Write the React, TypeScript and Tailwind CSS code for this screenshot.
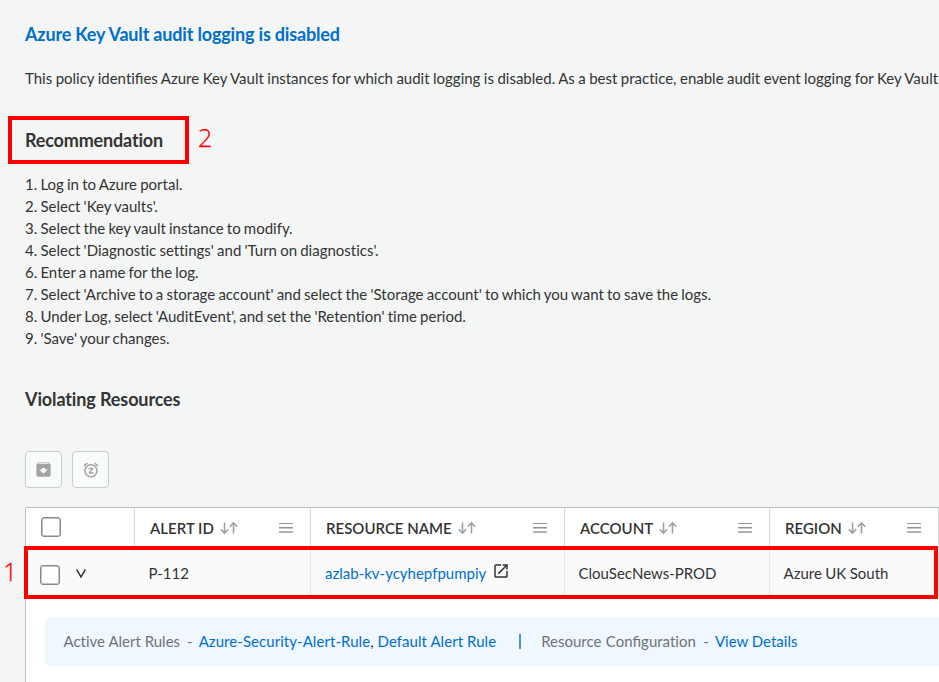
import type { ReactNode } from "react";
import { MdArchive, MdOpenInNew, MdSnooze } from "react-icons/md";

const steps = [
  "1. Log in to Azure portal.",
  "2. Select 'Key vaults'.",
  "3. Select the key vault instance to modify.",
  "4. Select 'Diagnostic settings' and 'Turn on diagnostics'.",
  "6. Enter a name for the log.",
  "7. Select 'Archive to a storage account' and select the 'Storage account' to which you want to save the logs.",
  "8. Under Log, select 'AuditEvent', and set the 'Retention' time period.",
  "9. 'Save' your changes.",
];

const columns = "grid grid-cols-[108px_176px_254px_205px_169px_1fr]";

function SortIcon() {
  return (
    <svg className="ml-[6px] h-[14px] w-[18px] shrink-0" viewBox="0 0 18 14" fill="none" stroke="#9aa3a1" strokeWidth="1.6">
      <path d="M4.5 1.5v10.5M0.7 8.2l3.8 3.8 3.8-3.8M13.5 12.5V2M9.7 5.8l3.8-3.8 3.8 3.8" />
    </svg>
  );
}

function MenuIcon() {
  return (
    <svg className="h-[10px] w-[14px]" viewBox="0 0 14 10" shapeRendering="crispEdges">
      <path fill="#8f9696" d="M0 0h14v1H0zM0 4h14v1H0z" />
      <path fill="#c4c8c8" d="M0 5h14v1H0z" />
      <path fill="#aeb2b2" d="M0 8h14v2H0z" />
    </svg>
  );
}

function HeaderCell({ children }: { children: ReactNode }) {
  return (
    <div className="flex items-center border-l border-[#d5d9da] pt-px pr-[17px] pl-[15px] font-semibold">
      <span>{children}</span>
      <SortIcon />
      <span className="ml-auto">
        <MenuIcon />
      </span>
    </div>
  );
}

function Checkbox() {
  return <span className="block size-5 rounded-[3px] border-[1.5px] border-[#84898c] bg-white shadow-[inset_0_0_0_0.5px_#84898c]" />;
}

function ToolButton({ children }: { children: ReactNode }) {
  return (
    <button className="flex size-[37px] items-center justify-center rounded-[4px] border border-[#c9cccc] bg-[#f9fafa] text-[#a2a4a4]">
      {children}
    </button>
  );
}

function Fi() {
  return <span className="[font-variant-ligatures:common-ligatures]">fi</span>;
}

export default function App() {
  return (
    <main className="relative h-[682px] w-full overflow-hidden bg-[#f4f6f5] pl-[25px] font-['Lato','Liberation_Sans',sans-serif] text-[15px] leading-[22px] whitespace-nowrap text-[#333] [font-variant-ligatures:no-common-ligatures]">
      <h1 className="pt-[23px] text-[18px] font-bold tracking-[-0.17px] text-[#006fcc]">
        <span>Azure Key Vault audit logging is disabled</span>
      </h1>
      <p className="mt-[22px] [word-spacing:-0.38px]">
        This policy identi<Fi />es Azure Key Vault instances for which audit logging is disabled. As a best practice, enable audit event logging for Key Vault
      </p>
      <h2 className="mt-[40px] text-[18px] font-bold tracking-[-0.17px]">
        <span>Recommendation</span>
      </h2>
      <ol className="mt-[22px] [word-spacing:-0.67px]">
        {steps.map((step) => (
          <li key={step}>{step}</li>
        ))}
      </ol>
      <h2 className="mt-[39px] text-[18px] font-bold tracking-[-0.12px]">
        <span>Violating Resources</span>
      </h2>

      <div className="mt-[41px] flex gap-[10px]">
        <ToolButton>
          <MdArchive size={19} />
        </ToolButton>
        <ToolButton>
          <MdSnooze size={18} />
        </ToolButton>
      </div>

      <section className="mt-[19px] h-[200px] border-t border-l border-[#bcc1c3] bg-white">
        <div className={`${columns} h-[39px]`}>
          <div className="pt-[9px] pl-[15px]">
            <Checkbox />
          </div>
          <HeaderCell>ALERT ID</HeaderCell>
          <HeaderCell>RESOURCE NAME</HeaderCell>
          <HeaderCell>ACCOUNT</HeaderCell>
          <HeaderCell>REGION</HeaderCell>
          <div className="border-l border-[#d5d9da]" />
        </div>
        <div className={`${columns} h-[50px] items-stretch bg-[#fafafa]`}>
          <div className="flex items-center gap-4 pt-[6px] pl-[14px]">
            <Checkbox />
            <svg className="mb-[3px] h-[9px] w-[10px]" viewBox="0 0 10 9" fill="none" stroke="#333" strokeWidth="1.5">
              <path d="M0.7 0.3L5 8L9.3 0.3" />
            </svg>
          </div>
          <div className="flex items-center pt-[2px] pl-[14.5px]">P-112</div>
          <div className="flex items-center border-l border-[#e6e8e8] pt-[2px] pl-[14px]">
            <a className="text-[#006fcc]">azlab-kv-ycyhepfpumpiy</a>
            <MdOpenInNew size={18} className="mb-[5px] ml-[6px]" />
          </div>
          <div className="flex items-center border-l border-[#e6e8e8] pt-[2px] pl-[13.5px]">ClouSecNews-PROD</div>
          <div className="flex items-center border-l border-[#e6e8e8] pt-[2px] pl-[13.5px] [word-spacing:-0.4px]">Azure UK South</div>
          <div className="border-l border-[#e6e8e8]" />
        </div>
        <div className="mt-5 ml-[19px] flex h-[49px] items-center rounded-l-[4px] bg-[#eff7ff] pb-[2px] pl-[18.5px] text-[#707375]">
          <span>Active Alert Rules</span>
          <span className="ml-[7px]">-</span>
          <span className="ml-[6px] tracking-[0.055px] text-[#006fcc]">
            Azure-Security-Alert-Rule<span className="text-[#333]">,</span> Default Alert Rule
          </span>
          <span className="mt-px ml-[23px] h-[15px] w-[2px] bg-[#4a93d0]" />
          <span className="ml-[20px] [word-spacing:0.5px]">Resource Con<Fi />guration</span>
          <span className="ml-[7.5px]">-</span>
          <a className="ml-[6px]  text-[#006fcc]">View Details</a>
        </div>
      </section>

      <div className="absolute top-[116px] left-[8px] h-[48px] w-[181px] border-4 border-[#ff0000]" />
      <span className="absolute top-[121px] left-[198px] font-['Open_Sans',sans-serif] text-[25px] leading-[32px] font-light text-[#ff0000] [-webkit-text-stroke:0.3px_#ff0000]">2</span>
      <div className="absolute top-[546px] left-[24px] h-[53px] w-[914px] border-4 border-[#ff0000]" />
      <span className="absolute top-[555px] left-[3px] font-['Open_Sans',sans-serif] text-[25px] leading-[32px] font-light text-[#ff0000] [-webkit-text-stroke:0.3px_#ff0000]">1</span>
    </main>
  );
}
